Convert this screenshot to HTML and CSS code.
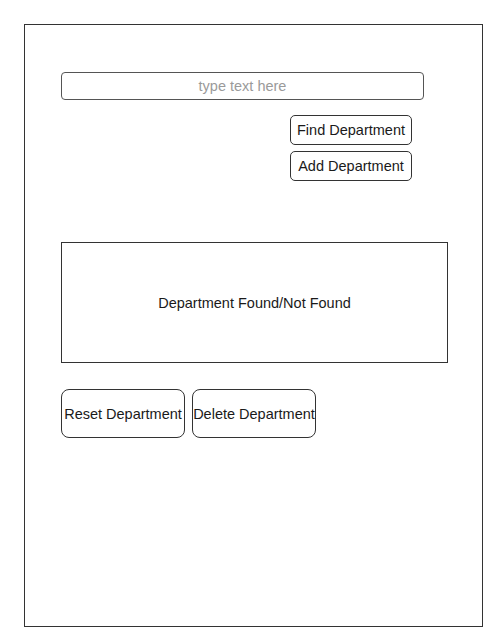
FILE: index.html
```html
<!DOCTYPE html>
<html lang="en">
<head>
    <meta charset="UTF-8">
    <meta name="viewport" content="width=device-width, initial-scale=1.0">
    <title>Department Manager</title>
    <link rel="stylesheet" href="styles.css">
</head>
<body>
    <div id="frame">
        <input id="dept-input" type="text" placeholder="type text here">
        <div class="actions">
            <button type="button" class="btn-small">Find Department</button>
            <button type="button" class="btn-small">Add Department</button>
        </div>
        <div id="result">Department Found/Not Found</div>
        <div class="bottom-actions">
            <button type="button" class="btn-large">Reset Department</button>
            <button type="button" class="btn-large">Delete Department</button>
        </div>
    </div>
</body>
</html>
```

FILE: styles.css
```css
body {
    font-family: 'Liberation Sans', Arial, sans-serif;
    margin: 0;
    background-color: #fff;
    color: #1a1a1a;
}
#frame {
    box-sizing: border-box;
    margin: 24px 0 0 24px;
    width: 459px;
    height: 603px;
    border: 1px solid #333;
    padding: 47px 0 0 36px;
    display: flex;
    flex-direction: column;
    align-items: flex-start;
}
#dept-input {
    box-sizing: border-box;
    width: 363px;
    height: 28px;
    margin: 0;
    border: 1.5px solid #555;
    border-radius: 4px;
    font-family: inherit;
    font-size: 14.5px;
    text-align: center;
    padding: 0;
    outline: none;
}
#dept-input::placeholder {
    color: #9a9a9a;
}
.actions {
    margin: 15px 0 0 229px;
    display: flex;
    flex-direction: column;
    gap: 6px;
}
button {
    box-sizing: border-box;
    background-color: #fff;
    color: #1a1a1a;
    font-family: inherit;
    font-size: 14.5px;
    border: 1px solid #333;
    padding: 0;
    margin: 0;
    cursor: pointer;
    white-space: nowrap;
}
.btn-small {
    width: 122px;
    height: 30px;
    border-radius: 5px;
}
#result {
    box-sizing: border-box;
    margin-top: 61px;
    width: 387px;
    height: 121px;
    border: 1px solid #333;
    display: flex;
    align-items: center;
    justify-content: center;
    font-size: 14.5px;
}
.bottom-actions {
    margin-top: 26px;
    display: flex;
    gap: 7px;
}
.btn-large {
    width: 124px;
    height: 49px;
    border-radius: 8px;
}
```
